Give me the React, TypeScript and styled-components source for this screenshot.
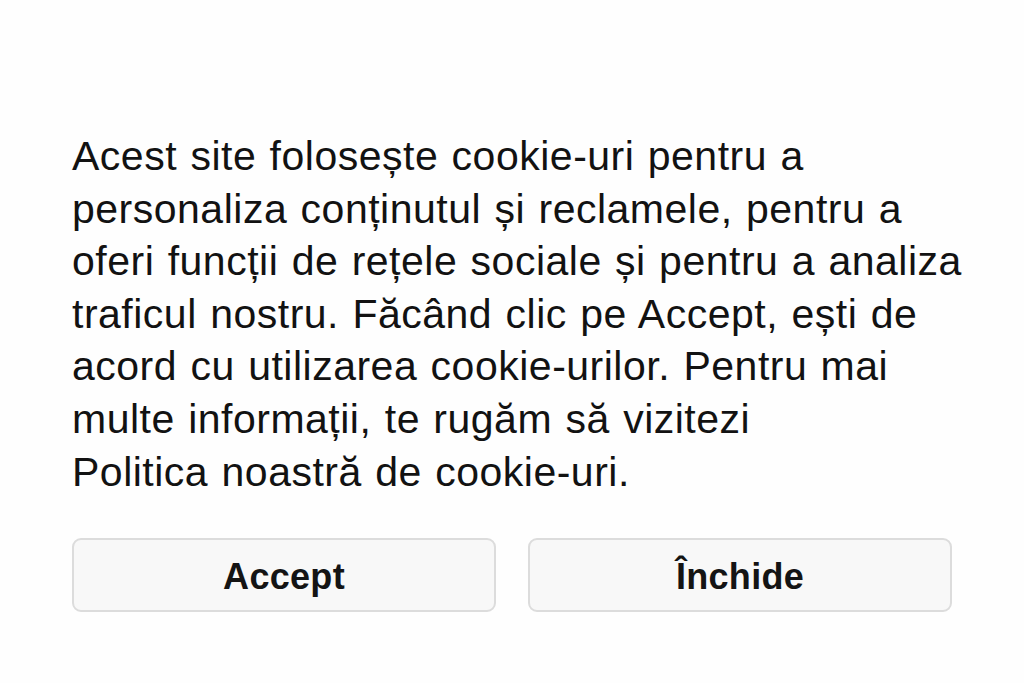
import React from "react";
import styled, { createGlobalStyle } from "styled-components";

const Global = createGlobalStyle`
  html, body { margin: 0; padding: 0; background: #fefefe; }
  body { font-family: "Liberation Sans", Arial, sans-serif; color: #111; }
`;

const Page = styled.div`
  width: 1024px;
  height: 683px;
  box-sizing: border-box;
  padding: 130px 72px 0 72px;
  display: flex;
  flex-direction: column;
`;

const Message = styled.p`
  margin: 0;
  font-size: 41px;
  line-height: 52.6px;
  color: #121212;
  letter-spacing: 0.5px;
  word-spacing: 1.5px;
  white-space: nowrap;
`;

const Actions = styled.div`
  margin-top: 40px;
  display: grid;
  grid-template-columns: 424px 424px;
  column-gap: 32px;
`;

const Button = styled.button`
  height: 74px;
  border: 2px solid #dcdcdc;
  border-radius: 9px;
  background: #f8f8f8;
  font-family: "Liberation Sans", Arial, sans-serif;
  font-size: 36px;
  font-weight: 700;
  letter-spacing: 0.3px;
  color: #141414;
  cursor: pointer;
  padding: 3px 0 0 0;
`;

const lines = [
  "Acest site folosește cookie-uri pentru a",
  "personaliza conținutul și reclamele, pentru a",
  "oferi funcții de rețele sociale și pentru a analiza",
  "traficul nostru. Făcând clic pe Accept, ești de",
  "acord cu utilizarea cookie-urilor. Pentru mai",
  "multe informații, te rugăm să vizitezi",
  "Politica noastră de cookie-uri.",
];

export default function App() {
  return (
    <>
      <Global />
      <Page>
        <Message>
          {lines.map((l, i) => (
            <React.Fragment key={i}>
              {l}
              {i < lines.length - 1 && <br />}
            </React.Fragment>
          ))}
        </Message>
        <Actions>
          <Button>Accept</Button>
          <Button>Închide</Button>
        </Actions>
      </Page>
    </>
  );
}
